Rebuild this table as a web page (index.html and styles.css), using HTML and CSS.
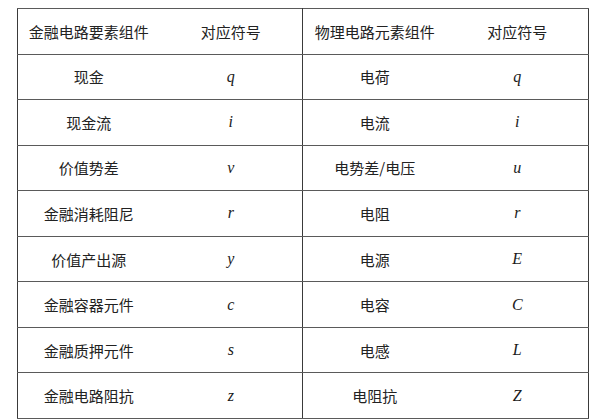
FILE: index.html
```html
<!DOCTYPE html>
<html lang="zh">
<head>
<meta charset="utf-8">
<link rel="stylesheet" href="styles.css">
</head>
<body>
<table class="map">
  <colgroup>
    <col class="c1"><col class="c2"><col class="c3"><col class="c4">
  </colgroup>
  <tr class="head">
    <td>金融电路要素组件</td><td class="mid">对应符号</td><td>物理电路元素组件</td><td>对应符号</td>
  </tr>
  <tr><td>现金</td><td class="sym mid">q</td><td>电荷</td><td class="sym">q</td></tr>
  <tr><td>现金流</td><td class="sym mid">i</td><td>电流</td><td class="sym">i</td></tr>
  <tr><td>价值势差</td><td class="sym mid">v</td><td>电势差/电压</td><td class="sym">u</td></tr>
  <tr><td>金融消耗阻尼</td><td class="sym mid">r</td><td>电阻</td><td class="sym">r</td></tr>
  <tr><td>价值产出源</td><td class="sym mid">y</td><td>电源</td><td class="sym">E</td></tr>
  <tr><td>金融容器元件</td><td class="sym mid">c</td><td>电容</td><td class="sym">C</td></tr>
  <tr><td>金融质押元件</td><td class="sym mid">s</td><td>电感</td><td class="sym">L</td></tr>
  <tr><td>金融电路阻抗</td><td class="sym mid">z</td><td>电阻抗</td><td class="sym">Z</td></tr>
</table>
</body>
</html>
```
FILE: styles.css
```css
html, body {
  margin: 0;
  padding: 0;
  background: #ffffff;
}
body {
  padding: 8px 0 0 17px;
  font-family: "Noto Sans CJK SC", "Noto Sans", sans-serif;
  color: #222222;
}
.map {
  border-collapse: collapse;
  width: 571px;
  height: 411px;
  table-layout: fixed;
  border: 1px solid #3a3a3a;
}
.c1 { width: 142px; }
.c2 { width: 143px; }
.c3 { width: 144px; }
.c4 { width: 142px; }
.map td {
  text-align: center;
  vertical-align: middle;
  font-size: 15px;
  padding: 0;
  border-top: 1px solid #5a5a5a;
  border-bottom: 1px solid #5a5a5a;
  white-space: nowrap;
}
.map td.mid {
  border-right: 1px solid #3a3a3a;
}
.map td.sym {
  font-family: "Liberation Serif", "Times New Roman", serif;
  font-style: italic;
  font-size: 16px;
  color: #1a1a1a;
}
```
